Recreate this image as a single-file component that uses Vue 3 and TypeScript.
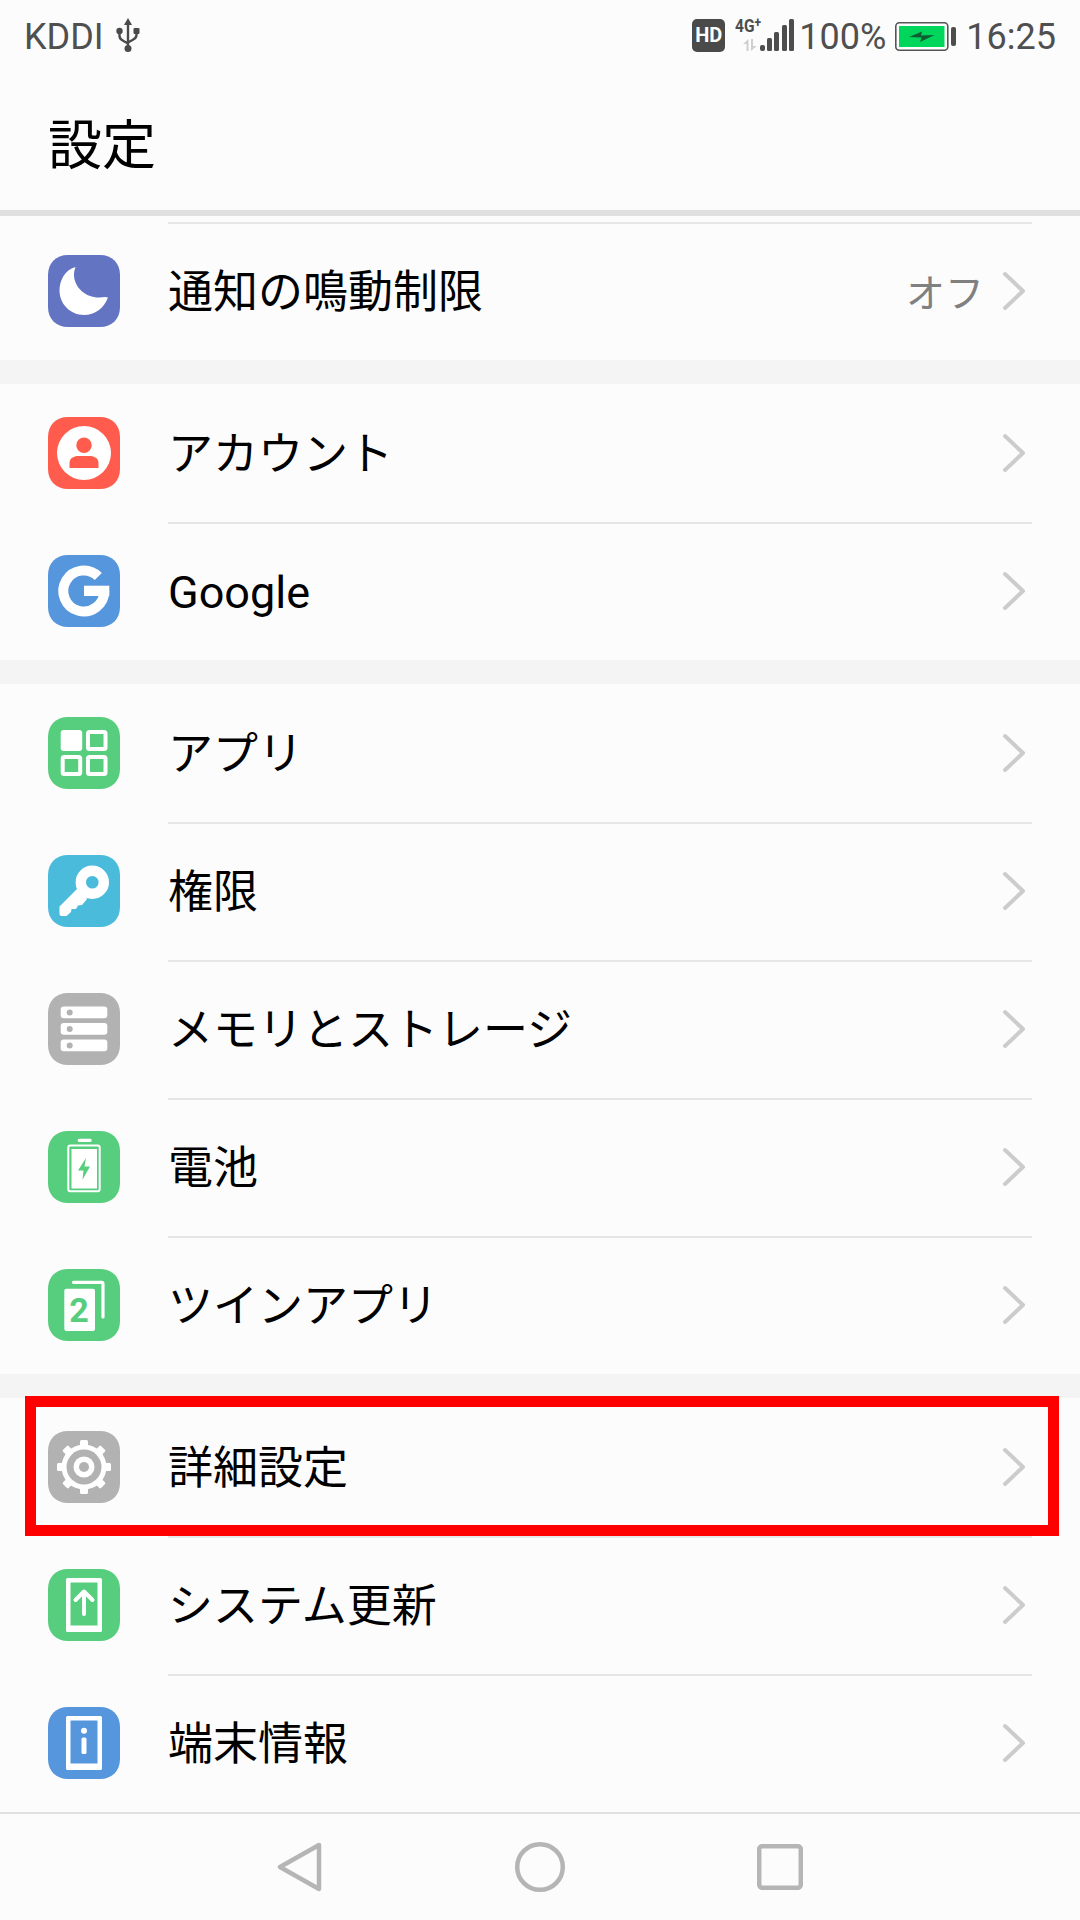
<script setup lang="ts">
interface Row { label: string; icon: string; value?: string; highlighted?: boolean }

const groups: Row[][] = [
  [{ label: '通知の鳴動制限', icon: 'moon', value: 'オフ' }],
  [
    { label: 'アカウント', icon: 'account' },
    { label: 'Google', icon: 'google' },
  ],
  [
    { label: 'アプリ', icon: 'apps' },
    { label: '権限', icon: 'key' },
    { label: 'メモリとストレージ', icon: 'storage' },
    { label: '電池', icon: 'battery' },
    { label: 'ツインアプリ', icon: 'twin' },
  ],
  [
    { label: '詳細設定', icon: 'gear', highlighted: true },
    { label: 'システム更新', icon: 'update' },
    { label: '端末情報', icon: 'info' },
  ],
]

const tileColors: Record<string, string> = {
  moon: '#6374c3',
  account: '#ff5c4e',
  google: '#5696dc',
  apps: '#57cd7e',
  key: '#4bbbdc',
  storage: '#b2b2b2',
  battery: '#57cd7e',
  twin: '#57cd7e',
  gear: '#b2b2b2',
  update: '#57cd7e',
  info: '#5696dc',
}

const gearTeeth = [0, 45, 90, 135, 180, 225, 270, 315]
const storageRows = [13.5, 30, 46.5]
</script>

<template>
  <div class="page">
    <div class="status">
      <div class="status-side">
        <span>KDDI</span>
        <svg class="usb" width="26" height="36" viewBox="0 0 26 36">
          <path d="M13 1 9 8h8z" fill="#4a4a4a" />
          <path d="M13 6v25M4.500 15v4c0 3 2 4 4 5l4.500 2.500M21.500 15v3c0 3-2 4-4 5L13 25.500" fill="none" stroke="#4a4a4a" stroke-width="2.400" />
          <circle cx="13" cy="31.500" r="3.500" fill="#4a4a4a" />
          <circle cx="4.500" cy="14" r="3.200" fill="#4a4a4a" />
          <rect x="18.500" y="11" width="6" height="6" rx="1" fill="#4a4a4a" />
        </svg>
      </div>
      <div class="status-side">
        <span class="hd">HD</span>
        <svg class="signal" width="60" height="44" viewBox="0 -8 60 44">
          <text x="0" y="14" class="net" textLength="26" lengthAdjust="spacingAndGlyphs">4G<tspan class="plus" dy="-5">+</tspan></text>
          <path d="M11.500 33V26H8L13.500 21V33ZM16 21H18V28H21.500L16 33Z" fill="#cfcfcf" />
          <rect x="25" y="27" width="5" height="6" rx="2" fill="#4d4d4d" />
          <rect x="32" y="20" width="5" height="13" rx="1.500" fill="#4d4d4d" />
          <rect x="39" y="14" width="5" height="19" rx="1.500" fill="#4d4d4d" />
          <rect x="47" y="7" width="5" height="26" rx="1.500" fill="#4d4d4d" />
          <rect x="54" y="1" width="5" height="32" rx="1.500" fill="#4d4d4d" />
        </svg>
        <span class="percent">100%</span>
        <svg class="batt" width="61" height="30" viewBox="0 0 61 30">
          <rect x="0.800" y="0.800" width="52" height="27.500" rx="3.500" fill="#fff" stroke="#555" stroke-width="1.600" />
          <rect x="4" y="4" width="45.500" height="21" fill="#00d65b" />
          <path d="M14 15 27 9.500 26 13.500 39.500 13 25 20 26.500 15.500Z" fill="#0d5c33" />
          <rect x="56" y="5" width="5" height="19" rx="2" fill="#4d4d4d" />
        </svg>
        <span class="clock">16:25</span>
      </div>
    </div>

    <div class="title">設定</div>

    <div class="list">
      <section v-for="(group, g) in groups" :key="g" class="group">
        <div v-for="(row, r) in group" :key="row.label" class="row">
          <svg class="tile" width="72" height="72" viewBox="0 0 72 72">
            <path d="M20 0H52C64 0 72 8 72 20V52C72 64 64 72 52 72H20C8 72 0 64 0 52V20C0 8 8 0 20 0Z" :fill="tileColors[row.icon]" />
            <path v-if="row.icon === 'moon'" d="M27.500 12C16.500 15 11.500 26 11.500 35.500 11.500 49 22.500 60 36 60 47 60 56 53 60 42.500 58 41.500 56 42 52 42.500 38 43 27 33 26 21 25.700 18 26.500 15 27.500 12Z" fill="#fff" />
            <template v-else-if="row.icon === 'account'">
              <circle cx="36" cy="36" r="27" fill="#fff" />
              <circle cx="36" cy="28.300" r="7.700" :fill="tileColors.account" />
              <path d="M21.500 51V46C21.500 41 26 39 30 39H42C46 39 50.500 41 50.500 46V51Z" :fill="tileColors.account" />
            </template>
            <template v-else-if="row.icon === 'google'">
              <path d="M50.300 21.500A20.500 20.500 0 1 0 56.300 36" fill="none" stroke="#fff" stroke-width="10" />
              <rect x="36" y="30.700" width="25.300" height="10.300" fill="#fff" />
            </template>
            <template v-else-if="row.icon === 'apps'">
              <rect x="12.700" y="13" width="21.500" height="21" rx="3" fill="#fff" />
              <rect x="40" y="15" width="17.500" height="17" rx="1.500" fill="none" stroke="#fff" stroke-width="4" />
              <rect x="14.700" y="40" width="17.500" height="17" rx="1.500" fill="none" stroke="#fff" stroke-width="4" />
              <rect x="40" y="40" width="17.500" height="17" rx="1.500" fill="none" stroke="#fff" stroke-width="4" />
            </template>
            <template v-else-if="row.icon === 'key'">
              <path d="M33 30 11.500 51.500V59Q11.500 61 13.500 61H18.500L23 57 23.500 54H28L30 50.500 34 50 39 44Z" fill="#fff" />
              <circle cx="44.300" cy="27.300" r="11.500" fill="none" stroke="#fff" stroke-width="10.400" />
            </template>
            <template v-else-if="row.icon === 'storage'">
              <template v-for="y in storageRows" :key="y">
                <rect x="12.700" :y="y" width="46.600" height="11.800" rx="3" fill="#fff" />
                <circle cx="21.700" :cy="y + 5.900" r="3" :fill="tileColors.storage" />
              </template>
            </template>
            <template v-else-if="row.icon === 'battery'">
              <rect x="29.700" y="7.700" width="14" height="3.300" rx="1.500" fill="#fff" />
              <rect x="20.300" y="14.500" width="31.400" height="45.700" rx="2" fill="none" stroke="#fff" stroke-width="2" />
              <rect x="23.500" y="18" width="25.500" height="39.500" fill="#fff" />
              <path d="M38 27 30 39.500H35.500L34.500 48.700 42 35.500H36.500Z" :fill="tileColors.battery" />
            </template>
            <template v-else-if="row.icon === 'twin'">
              <path d="M25.500 13.300H53.500Q55 13.300 55 15V48" fill="none" stroke="#fff" stroke-width="3.200" stroke-linecap="round" />
              <rect x="16.300" y="19.700" width="30.700" height="42.300" rx="2" fill="#fff" />
              <text x="31" y="53" class="two" :fill="tileColors.twin">2</text>
            </template>
            <template v-else-if="row.icon === 'gear'">
              <circle cx="36" cy="36" r="22.500" fill="#fff" />
              <rect v-for="a in gearTeeth" :key="a" x="32" y="9" width="8" height="10" rx="1.500" fill="#fff" :transform="`rotate(${a} 36 36)`" />
              <circle cx="36" cy="36" r="17.500" :fill="tileColors.gear" />
              <circle cx="36" cy="36" r="10.500" fill="#fff" />
              <circle cx="36" cy="36" r="5" :fill="tileColors.gear" />
            </template>
            <template v-else-if="row.icon === 'update' || row.icon === 'info'">
              <path fill-rule="evenodd" d="M19.500 9H52.500Q54 9 54 10.500V61.500Q54 63 52.500 63H19.500Q18 63 18 61.500V10.500Q18 9 19.500 9ZM22.500 13.500V56.500H49.500V13.500Z" fill="#fff" />
              <path v-if="row.icon === 'update'" d="M36 45V23M27.500 31 36 22.500 44.500 31" fill="none" stroke="#fff" stroke-width="4" stroke-linecap="round" stroke-linejoin="round" />
              <template v-else>
                <circle cx="36" cy="23.800" r="3" fill="#fff" />
                <rect x="33.500" y="30.500" width="5" height="16.500" rx="1.500" fill="#fff" />
              </template>
            </template>
          </svg>
          <div class="body" :class="{ ruled: r > 0 || g === 0 }">
            <span class="label">{{ row.label }}</span>
            <span v-if="row.value" class="value">{{ row.value }}</span>
            <svg class="chevron" width="24" height="40" viewBox="0 0 24 40">
              <path d="M3 3 21 20 3 37" fill="none" stroke="#cccccc" stroke-width="4" stroke-linecap="round" stroke-linejoin="round" />
            </svg>
          </div>
          <div v-if="row.highlighted" class="highlight"></div>
        </div>
      </section>
    </div>

    <nav class="nav">
      <svg width="46" height="50" viewBox="0 0 46 50">
        <path d="M42 3 3 25 42 47Z" fill="none" stroke="#b5b5b5" stroke-width="4.500" stroke-linejoin="round" />
      </svg>
      <svg width="52" height="52" viewBox="0 0 52 52">
        <circle cx="26" cy="26" r="22.800" fill="none" stroke="#b5b5b5" stroke-width="4.500" />
      </svg>
      <svg width="46" height="46" viewBox="0 0 46 46">
        <rect x="2.200" y="2.200" width="41.600" height="41.600" rx="3" fill="none" stroke="#b5b5b5" stroke-width="4.500" />
      </svg>
    </nav>
  </div>
</template>

<style scoped>
.page {
  width: 1080px;
  height: 1920px;
  overflow: hidden;
  display: flex;
  flex-direction: column;
  background: #fcfcfc;
  font-family: Roboto, "Noto Sans CJK JP", sans-serif;
  color: #000;
}
.status {
  height: 70px;
  padding: 4px 24px 0 24px;
  box-sizing: border-box;
  display: flex;
  justify-content: space-between;
  align-items: center;
  font-size: 36px;
  color: #4f4f4f;
}
.status-side {
  display: flex;
  align-items: center;
}
.usb {
  margin-left: 11px;
  margin-top: -4px;
}
.hd {
  width: 33px;
  height: 33px;
  border-radius: 5px;
  background: #4a4a4a;
  color: #fff;
  font-size: 20px;
  font-weight: 700;
  line-height: 33px;
  text-align: center;
  margin-top: -4px;
}
.signal {
  margin-left: 10px;
  margin-top: -10px;
}
.net {
  font-size: 18px;
  font-weight: 700;
  fill: #4d4d4d;
  font-family: Roboto, sans-serif;
}
.plus {
  font-size: 14px;
}
.percent {
  margin-left: 4px;
}
.batt {
  margin-left: 9px;
}
.clock {
  margin-left: 10px;
}
.title {
  height: 146px;
  padding: 2px 0 0 48px;
  box-sizing: border-box;
  display: flex;
  align-items: center;
  font-size: 54px;
  border-bottom: 6px solid #e0e0e0;
}
.list {
  padding-top: 6px;
  display: flex;
  flex-direction: column;
  gap: 24px;
  background: #f4f4f4;
}
.group {
  background: #fcfcfc;
  padding-left: 48px;
}
.list .group:first-child {
  margin-top: -6px;
  padding-top: 6px;
}
.row {
  position: relative;
  height: 138px;
  display: flex;
  align-items: center;
  gap: 48px;
}
.tile {
  flex: none;
}
.two {
  font-size: 34px;
  font-weight: 700;
  text-anchor: middle;
  font-family: Roboto, sans-serif;
}
.body {
  flex: 1;
  height: 138px;
  margin-right: 48px;
  box-sizing: border-box;
  border-top: 2px solid transparent;
  border-bottom: 2px solid transparent;
  display: flex;
  align-items: center;
}
.ruled {
  border-top-color: #e6e6e6;
}
.label {
  flex: 1;
  font-size: 45px;
  line-height: 1;
  margin-top: 2px;
}
.value {
  font-size: 39px;
  color: #808080;
  margin: -3px 18px 0 0;
}
.chevron {
  margin-right: 6px;
}
.highlight {
  position: absolute;
  top: -2px;
  bottom: 0;
  left: -23px;
  width: 1034px;
  box-sizing: border-box;
  border: 11px solid #ff0000;
}
.nav {
  flex: 1;
  border-top: 2px solid #e0e0e0;
  display: flex;
  align-items: center;
  justify-content: center;
  gap: 191px;
  background: #fcfcfc;
}
</style>

<style>
html, body {
  margin: 0;
  background: #fcfcfc;
}
</style>
